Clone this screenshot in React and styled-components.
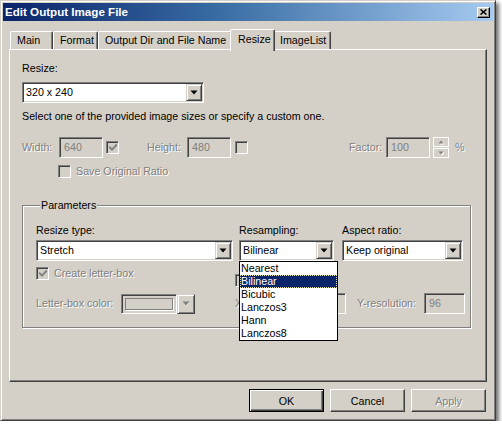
import React from "react";
import styled, { createGlobalStyle, css } from "styled-components";

const Global = createGlobalStyle`
  html, body { margin: 0; padding: 0; background: #ffffff; }
  body { font-family: "Liberation Sans", Arial, sans-serif; font-size: 10.7px; color: #000; }
  * { box-sizing: border-box; }
`;

const raised = css`
  border: 1px solid;
  border-color: #ffffff #404040 #404040 #ffffff;
  box-shadow: inset -1px -1px #808080;
  background: #d4d0c8;
`;

const sunken = css`
  border: 1px solid;
  border-color: #808080 #ffffff #ffffff #808080;
  box-shadow: inset 1px 1px #404040, inset -1px -1px #d4d0c8;
`;

const disabledText = css`
  color: #808080;
  text-shadow: 1px 1px 0 #ffffff;
`;

const Window = styled.div`
  width: 496px;
  height: 421px;
  background: #d4d0c8;
  border: 1px solid;
  border-color: #d4d0c8 #404040 #404040 #d4d0c8;
  box-shadow: inset 1px 1px #ffffff, inset -1px -1px #808080, 3px 3px 4px rgba(0, 0, 0, 0.55);
  padding: 2px;
  display: flex;
  flex-direction: column;
`;

const TitleBar = styled.div`
  height: 18px;
  flex: none;
  display: flex;
  align-items: center;
  justify-content: space-between;
  padding: 0 3px 0 2px;
  background: linear-gradient(to right, #0a246a 0%, #3a6ea5 45%, #a6caf0 100%);
`;

const TitleText = styled.span`
  color: #ffffff;
  font-weight: bold;
  font-size: 11.6px;
  line-height: 18px;
`;

const CloseButton = styled.div`
  width: 13px;
  height: 11px;
  ${raised};
  border-color: #ffffff #000000 #000000 #ffffff;
  display: flex;
  align-items: center;
  justify-content: center;
`;

const Body = styled.div`
  flex: 1;
  display: flex;
  flex-direction: column;
  padding: 8px 6px 6px 6px;
`;

const TabStrip = styled.div`
  height: 20px;
  flex: none;
  display: flex;
  align-items: flex-start;
  padding-left: 1px;
`;

const Tab = styled.div`
  position: relative;
  flex: none;
  width: ${(p) => p.$w}px;
  height: 18px;
  margin-top: 2px;
  padding-left: 6px;
  line-height: 17px;
  white-space: nowrap;
  overflow: hidden;
  background: #d4d0c8;
  border-top: 1px solid #ffffff;
  border-left: 1px solid #ffffff;
  border-right: 1px solid #404040;
  border-radius: 2px 2px 0 0;
  box-shadow: inset -1px 0 #808080;
  ${(p) =>
    p.$active &&
    css`
      z-index: 2;
      width: ${p.$w + 4}px;
      height: 22px;
      margin: 0 -2px;
      padding-left: 7px;
      line-height: 19px;
    `}
`;

const Panel = styled.div`
  flex: 1;
  border: 1px solid;
  border-color: #ffffff #404040 #404040 #ffffff;
  box-shadow: inset -1px -1px #808080;
  padding: 12px 12px 0 12px;
  display: flex;
  flex-direction: column;
  align-items: flex-start;
`;

const Text = styled.div`
  line-height: 13px;
  white-space: nowrap;
  margin-top: ${(p) => p.$mt || 0}px;
  ${(p) => p.$disabled && disabledText};
`;

const Label = styled.span`
  flex: none;
  display: inline-block;
  width: ${(p) => (p.$w ? `${p.$w}px` : "auto")};
  margin-left: ${(p) => p.$ml || 0}px;
  line-height: 13px;
  white-space: nowrap;
  ${(p) => p.$disabled && disabledText};
`;

const ComboBox = styled.div`
  ${sunken};
  position: relative;
  width: ${(p) => (p.$w ? `${p.$w}px` : "100%")};
  height: 21px;
  margin-top: ${(p) => p.$mt || 0}px;
  padding: 1px;
  background: #ffffff;
  display: flex;
  flex: none;
`;

const ComboText = styled.div`
  flex: 1;
  padding-left: 2px;
  line-height: 17px;
  white-space: nowrap;
  overflow: hidden;
`;

const ArrowButton = styled.div`
  ${raised};
  border-color: #d4d0c8 #404040 #404040 #d4d0c8;
  box-shadow: inset 1px 1px #ffffff, inset -1px -1px #808080;
  width: ${(p) => p.$w || 16}px;
  height: ${(p) => p.$h || 17}px;
  flex: none;
  display: flex;
  align-items: center;
  justify-content: center;
`;

const Row = styled.div`
  display: flex;
  align-items: center;
  height: ${(p) => p.$h || 21}px;
  margin-top: ${(p) => p.$mt || 0}px;
  margin-left: ${(p) => p.$ml || 0}px;
`;

const Field = styled.div`
  ${sunken};
  flex: none;
  width: ${(p) => p.$w}px;
  height: ${(p) => p.$h || 21}px;
  margin-left: ${(p) => p.$ml || 0}px;
  background: #d4d0c8;
  color: #808080;
  padding-left: 4px;
  line-height: ${(p) => (p.$h || 21) - 2}px;
`;

const CheckBox = styled.div`
  ${sunken};
  flex: none;
  width: 13px;
  height: 13px;
  margin-left: ${(p) => p.$ml || 0}px;
  margin-top: ${(p) => p.$mt || 0}px;
  background: ${(p) => (p.$disabled ? "#d4d0c8" : "#ffffff")};
  display: flex;
  align-items: center;
  justify-content: center;
`;

const CheckLabel = styled.div`
  display: flex;
  align-items: center;
  gap: 5px;
  height: 13px;
  margin-top: ${(p) => p.$mt || 0}px;
  margin-left: ${(p) => p.$ml || 0}px;
`;

const Spinner = styled.div`
  flex: none;
  width: 16px;
  height: 21px;
  margin-left: ${(p) => p.$ml || 0}px;
  display: flex;
  flex-direction: column;
  gap: 1px;
`;

const SpinHalf = styled.div`
  flex: 1;
  border: 1px solid #ffffff;
  display: flex;
  align-items: center;
  justify-content: center;
`;

const GroupBox = styled.fieldset`
  margin: 21px 0 0 0;
  width: 449px;
  min-width: 0;
  border: 1px solid #808080;
  box-shadow: inset 1px 1px #ffffff, 1px 1px #ffffff;
  padding: 0 0 13px 13px;
`;

const Legend = styled.legend`
  margin-left: 4px;
  padding: 0 1px;
  line-height: 13px;
  background: #d4d0c8;
`;

const Columns = styled.div`
  display: grid;
  grid-template-columns: 197px 95px 123px;
  column-gap: 6px;
  align-items: start;
  margin-top: ${(p) => p.$mt || 0}px;
`;

const Column = styled.div`
  display: flex;
  flex-direction: column;
  margin-left: ${(p) => p.$ml || 0}px;
  margin-top: ${(p) => p.$mt || 0}px;
`;

const ComboWrap = styled.div`
  position: relative;
  margin-top: 3px;
`;

const DropList = styled.div`
  position: absolute;
  z-index: 10;
  top: 100%;
  left: 0;
  width: 99px;
  border: 1px solid #000000;
  background: #ffffff;
  padding: 0;
`;

const DropItem = styled.div`
  height: 13px;
  line-height: 13px;
  padding-left: 1px;
  white-space: nowrap;
  ${(p) =>
    p.$selected &&
    css`
      background: #0a246a;
      color: #ffffff;
      outline: 1px dotted #e8e4a0;
      outline-offset: -1px;
    `}
`;

const ColorCombo = styled.div`
  display: flex;
  align-items: center;
  flex: none;
`;

const Swatch = styled.div`
  ${sunken};
  width: 56px;
  height: 20px;
  padding: 3px;
  background: #d4d0c8;
`;

const SwatchInner = styled.div`
  width: 100%;
  height: 100%;
  border: 1px solid #808080;
  box-shadow: 1px 1px #ffffff;
`;

const ButtonRow = styled.div`
  display: flex;
  justify-content: flex-end;
  gap: 6px;
  margin-top: 7px;
  padding-right: 1px;
`;

const Button = styled.div`
  width: 75px;
  height: 23px;
  display: flex;
  align-items: center;
  justify-content: center;
  background: #d4d0c8;
  border: 1px solid;
  border-color: #ffffff #404040 #404040 #ffffff;
  box-shadow: inset -1px -1px #808080;
  ${(p) =>
    p.$default &&
    css`
      border-color: #000000;
      box-shadow: inset 1px 1px #ffffff, inset -1px -1px #404040, inset -2px -2px #808080;
    `}
  ${(p) => p.$disabled && disabledText};
`;

const Arrow = ({ disabled }) => (
  <svg width="8" height="5" viewBox="0 0 8 5" style={{ display: "block", overflow: "visible" }}>
    {disabled && <path d="M2 2h5l-2.5 3z" fill="#ffffff" />}
    <path d="M0.5 0.5h7l-3.5 4z" fill={disabled ? "#808080" : "#000000"} />
  </svg>
);

const SmallArrow = ({ up }) => (
  <svg width="6" height="4" viewBox="0 0 6 4" style={{ display: "block", overflow: "visible" }}>
    <path d={up ? "M1.5 4.5h5l-2.5-3z" : "M1.5 1.5h5l-2.5 3z"} fill="#ffffff" />
    <path d={up ? "M0.5 3.5h5l-2.5-3z" : "M0.5 0.5h5l-2.5 3z"} fill="#808080" />
  </svg>
);

const Check = ({ color }) => (
  <svg width="8" height="8" viewBox="0 0 8 8" style={{ display: "block" }}>
    <polyline points="0.8,3.4 3,5.6 7.2,1.2" fill="none" stroke={color} strokeWidth="2" strokeLinecap="square" />
  </svg>
);

const Combo = ({ w, value, mt }) => (
  <ComboBox $w={w} $mt={mt}>
    <ComboText>{value}</ComboText>
    <ArrowButton>
      <Arrow />
    </ArrowButton>
  </ComboBox>
);

export default function App() {
  return (
    <>
      <Global />
      <Window>
        <TitleBar>
          <TitleText>Edit Output Image File</TitleText>
          <CloseButton>
            <svg width="7" height="6" viewBox="0 0 7 6" style={{ display: "block" }}>
              <path d="M0.5 0.5L6.5 5.5M6.5 0.5L0.5 5.5" stroke="#000" strokeWidth="1.6" />
            </svg>
          </CloseButton>
        </TitleBar>
        <Body>
          <TabStrip>
            <Tab $w={43}>Main</Tab>
            <Tab $w={45}>Format</Tab>
            <Tab $w={134}>Output Dir and File Name</Tab>
            <Tab $w={41} $active>Resize</Tab>
            <Tab $w={58}>ImageList</Tab>
          </TabStrip>
          <Panel>
            <Text>Resize:</Text>
            <Combo w={182} mt={7} value="320 x 240" />
            <Text $mt={7}>Select one of the provided image sizes or specify a custom one.</Text>
            <Row $mt={14}>
              <Label $w={37} $disabled>Width:</Label>
              <Field $w={44}>640</Field>
              <CheckBox $ml={3} $disabled>
                <Check color="#808080" />
              </CheckBox>
              <Label $w={40} $ml={28} $disabled>Height:</Label>
              <Field $w={44}>480</Field>
              <CheckBox $ml={4} $disabled />
              <Label $w={37} $ml={101} $disabled>Factor:</Label>
              <Field $w={44}>100</Field>
              <Spinner $ml={3}>
                <SpinHalf>
                  <SmallArrow up />
                </SpinHalf>
                <SpinHalf>
                  <SmallArrow />
                </SpinHalf>
              </Spinner>
              <Label $ml={6} $disabled>%</Label>
            </Row>
            <CheckLabel $mt={7} $ml={36}>
              <CheckBox $disabled />
              <Label $disabled>Save Original Ratio</Label>
            </CheckLabel>
            <GroupBox>
              <Legend>Parameters</Legend>
              <Columns $mt={12}>
                <Column>
                  <Text>Resize type:</Text>
                  <ComboWrap>
                    <Combo value="Stretch" />
                  </ComboWrap>
                </Column>
                <Column>
                  <Text>Resampling:</Text>
                  <ComboWrap>
                    <Combo value="Bilinear" />
                    <DropList>
                      <DropItem>Nearest</DropItem>
                      <DropItem $selected>Bilinear</DropItem>
                      <DropItem>Bicubic</DropItem>
                      <DropItem>Lanczos3</DropItem>
                      <DropItem>Hann</DropItem>
                      <DropItem>Lanczos8</DropItem>
                    </DropList>
                  </ComboWrap>
                </Column>
                <Column $ml={2}>
                  <Text>Aspect ratio:</Text>
                  <ComboWrap>
                    <Combo value="Keep original" />
                  </ComboWrap>
                </Column>
              </Columns>
              <Columns $mt={6}>
                <CheckLabel>
                  <CheckBox $disabled>
                    <Check color="#808080" />
                  </CheckBox>
                  <Label $disabled>Create letter-box</Label>
                </CheckLabel>
                <CheckLabel $ml={-4} $mt={7}>
                  <CheckBox $disabled />
                </CheckLabel>
              </Columns>
              <Row $mt={6}>
                <Label $w={85} $disabled>Letter-box color:</Label>
                <ColorCombo>
                  <Swatch>
                    <SwatchInner />
                  </Swatch>
                  <ArrowButton $w={18} $h={20}>
                    <Arrow disabled />
                  </ArrowButton>
                </ColorCombo>
                <Label $w={68} $ml={40} $disabled>X-resolution:</Label>
                <Field $w={43}>96</Field>
                <Label $w={67} $ml={11} $disabled>Y-resolution:</Label>
                <Field $w={41}>96</Field>
              </Row>
            </GroupBox>
          </Panel>
          <ButtonRow>
            <Button $default>OK</Button>
            <Button>Cancel</Button>
            <Button $disabled>Apply</Button>
          </ButtonRow>
        </Body>
      </Window>
    </>
  );
}
